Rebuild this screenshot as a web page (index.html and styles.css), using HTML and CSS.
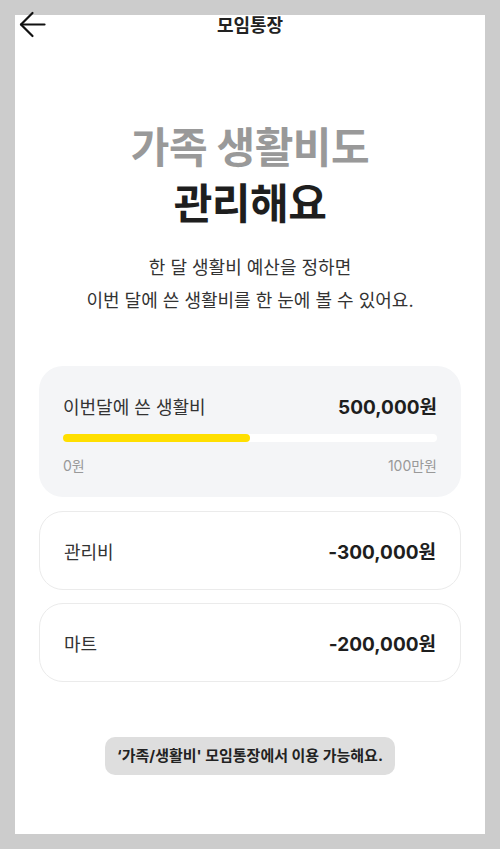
FILE: index.html
```html
<!DOCTYPE html>
<html lang="ko">
<head>
  <meta charset="UTF-8">
  <meta name="viewport" content="width=device-width, initial-scale=1.0">
  <title>모임통장</title>
  <link rel="stylesheet" href="styles.css">
</head>
<body>
  <div class="screen">
    <header class="topbar">
      <button class="back" aria-label="뒤로">
        <svg width="27" height="27" viewBox="0 0 27 27" fill="none" stroke="#111" stroke-width="2.2" stroke-linecap="round" stroke-linejoin="round">
          <path d="M25.5 13.5H2"/>
          <path d="M13.5 2L2 13.5 13.5 25"/>
        </svg>
      </button>
      <h1>모임통장</h1>
    </header>

    <section class="hero">
      <h2><span class="muted">가족 생활비도</span><br>관리해요</h2>
      <p>한 달 생활비 예산을 정하면<br>이번 달에 쓴 생활비를 한 눈에 볼 수 있어요.</p>
    </section>

    <div class="budget card">
      <div class="row">
        <span class="label">이번달에 쓴 생활비</span>
        <span class="amount">500,000원</span>
      </div>
      <div class="bar"><div class="fill" style="width: 50%"></div></div>
      <div class="scale">
        <span>0원</span>
        <span>100만원</span>
      </div>
    </div>

    <div class="item card">
      <div class="row">
        <span class="label">관리비</span>
        <span class="amount">-300,000원</span>
      </div>
    </div>

    <div class="item card">
      <div class="row">
        <span class="label">마트</span>
        <span class="amount">-200,000원</span>
      </div>
    </div>

    <div class="toast">‘가족/생활비' 모임통장에서 이용 가능해요.</div>
  </div>
</body>
</html>
```

FILE: styles.css
```css
body {
  margin: 0;
  background: #cccccc;
  font-family: Inter, "Noto Sans CJK KR", sans-serif;
  color: #222;
}
.screen {
  width: 470px;
  height: 819px;
  margin: 15px auto;
  background: #fff;
  box-sizing: border-box;
  padding: 0 24px;
  display: flex;
  flex-direction: column;
}
.topbar {
  position: relative;
  height: 22px;
  display: flex;
  justify-content: center;
  align-items: center;
}
.topbar h1 {
  margin: 0;
  font-size: 18px;
  font-weight: 700;
  color: #222;
  line-height: 22px;
}
.back {
  position: absolute;
  left: -20px;
  top: -4px;
  padding: 0;
  border: none;
  background: none;
  display: flex;
}
.hero {
  text-align: center;
  margin-top: 83px;
}
.hero h2 {
  margin: 0;
  font-size: 42px;
  font-weight: 700;
  line-height: 56px;
  color: #1e1e1e;
  letter-spacing: -0.5px;
}
.hero .muted {
  color: #999;
}
.hero p {
  margin: 19px 0 0;
  font-size: 18px;
  line-height: 33px;
  color: #333;
}
.card {
  border-radius: 24px;
  box-sizing: border-box;
  padding: 0 24px;
}
.budget {
  margin-top: 49px;
  background: #f4f5f7;
  height: 131px;
  padding-top: 26px;
}
.item {
  margin-top: 14px;
  height: 79px;
  border: 1px solid #ebebeb;
  display: flex;
  flex-direction: column;
  justify-content: center;
}
.item + .item {
  margin-top: 13px;
}
.row {
  display: flex;
  justify-content: space-between;
  align-items: center;
}
.label {
  font-size: 18px;
  color: #333;
}
.amount {
  font-size: 19px;
  font-weight: 700;
  color: #1e1e1e;
}
.bar {
  margin-top: 15px;
  height: 8px;
  border-radius: 4px;
  background: #fff;
}
.fill {
  height: 100%;
  border-radius: 4px;
  background: #ffdf00;
}
.scale {
  margin-top: 13px;
  display: flex;
  justify-content: space-between;
  font-size: 14px;
  color: #999;
}
.toast {
  margin: 55px auto 0;
  padding: 0 12px;
  height: 38px;
  line-height: 38px;
  border-radius: 10px;
  background: #dedede;
  font-size: 15px;
  font-weight: 700;
  color: #222;
}
```
